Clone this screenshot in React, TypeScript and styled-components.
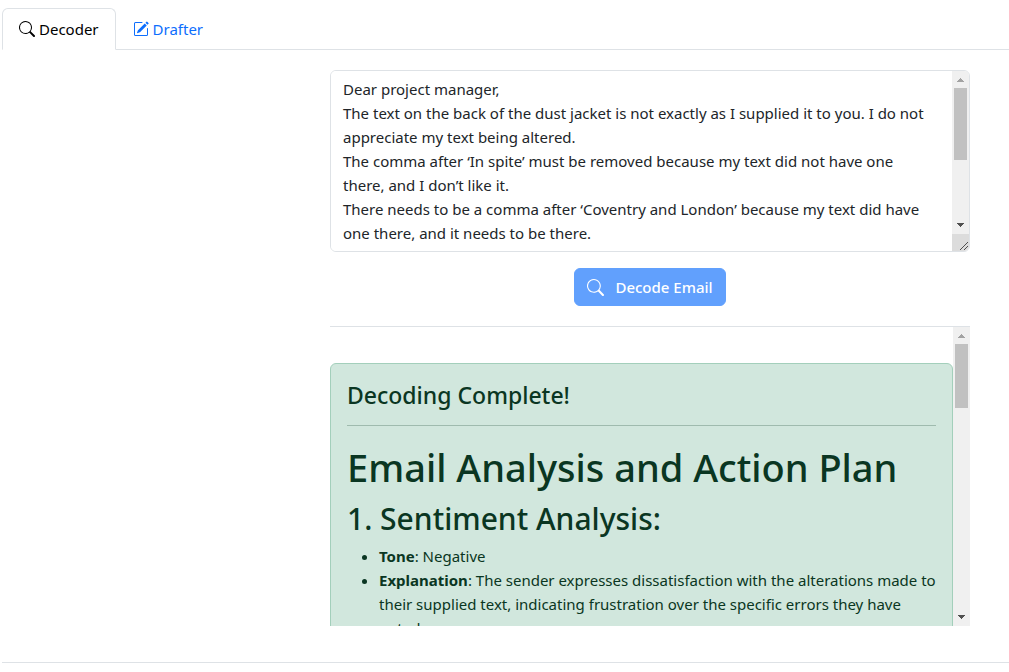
import React, { useState } from "react";
import styled, { createGlobalStyle } from "styled-components";
import { BsPencilSquare, BsSearch } from "react-icons/bs";

const GlobalStyle = createGlobalStyle`
  *, *::before, *::after { box-sizing: border-box; }
  body {
    margin: 0;
    background: #fff;
    color: #212529;
    font-family: "Segoe UI", "Noto Sans", "Open Sans", sans-serif;
    font-size: 15px;
    line-height: 24px;
  }
`;

const Page = styled.div`
  padding: 8px 0 0 2px;
`;

const TabList = styled.div`
  display: flex;
  border-bottom: 1px solid #dee2e6;
`;

const Tab = styled.button<{ $active: boolean }>`
  display: flex;
  align-items: center;
  gap: 4px;
  margin-bottom: -1px;
  padding: 8px 16px;
  border: 1px solid;
  border-color: ${(p) => (p.$active ? "#dee2e6 #dee2e6 #fff" : "transparent")};
  border-radius: 6px 6px 0 0;
  background: ${(p) => (p.$active ? "#fff" : "none")};
  color: ${(p) => (p.$active ? "#000" : "#0d6efd")};
  font: inherit;
  cursor: pointer;
`;

const Panel = styled.main`
  padding: 20px 39px 36px 16px;
  border-bottom: 1px solid #dee2e6;
`;

const Column = styled.div`
  display: flex;
  flex-direction: column;
  max-width: 640px;
  margin-left: auto;
`;

const EmailBox = styled.div`
  display: flex;
  height: 182px;
  border: 1px solid #dee2e6;
  border-radius: 6px;
  overflow: hidden;
`;

const EmailText = styled.textarea`
  flex: 1;
  min-width: 0;
  padding: 6px 16px 6px 12px;
  border: 0;
  background: #fff;
  color: inherit;
  font: inherit;
  resize: none;
  outline: none;
  scrollbar-width: none;
`;

const BarColumn = styled.div`
  display: flex;
  flex-direction: column;
  width: 17px;
  background: #f0f0f0;
`;

const Track = styled.div`
  flex: 1;
  padding: 0 2px;
`;

const Thumb = styled.div<{ $size: number }>`
  height: ${(p) => p.$size}%;
  background: #c1c1c1;
`;

const DecodeButton = styled.button`
  display: flex;
  align-items: center;
  align-self: center;
  gap: 11px;
  margin: 16px 0 20px;
  padding: 6px 12px;
  border: 1px solid #0d6efd;
  border-radius: 6px;
  background: #0d6efd;
  color: #fff;
  font: inherit;
  font-weight: 500;
  opacity: 0.65;
`;

const Results = styled.section`
  display: flex;
  height: 300px;
  border-top: 1px solid #dee2e6;
`;

const ResultsView = styled.div`
  flex: 1;
  min-width: 0;
  padding-top: 36px;
  overflow-y: auto;
  scrollbar-width: none;
`;

const Alert = styled.div`
  padding: 16px;
  border: 1px solid #a3cfbb;
  border-radius: 6px;
  background: #d1e7dd;
  color: #0a3622;
`;

const Title = styled.h4`
  margin: 0;
  font-size: 23px;
  font-weight: 500;
  line-height: 31px;
`;

const Rule = styled.hr`
  margin: 14px 0 16px;
  border: 0;
  border-top: 1px solid #0a3622;
  opacity: 0.25;
`;

const Heading = styled.h1`
  margin: 0 0 8px;
  font-size: 38px;
  font-weight: 500;
  line-height: 50px;
`;

const Subheading = styled.h2`
  margin: 0 0 6px;
  font-size: 30px;
  font-weight: 500;
  line-height: 38px;
`;

const List = styled.ul`
  margin: 0 0 16px;
  padding-left: 32px;
`;

function ScrollBar({ size, grip = false }: { size: number; grip?: boolean }) {
  return (
    <BarColumn aria-hidden>
      <svg width="17" height="17" shapeRendering="crispEdges">
        <path d="M5 11h7v-1h-1v-1h-1v-1h-1v-1h-1v1h-1v1h-1v1h-1z" fill="#a3a3a3" />
      </svg>
      <Track>
        <Thumb $size={size} />
      </Track>
      <svg width="17" height="17" shapeRendering="crispEdges">
        <path d="M5 6h7v1h-1v1h-1v1h-1v1h-1v-1h-1v-1h-1v-1h-1z" fill="#505050" />
      </svg>
      {grip && (
        <svg width="17" height="17">
          <path d="M0 0h17v17H0z" fill="#dcdcdc" />
          <path d="M8 16l8-8M12 16l4-4" stroke="#505050" />
        </svg>
      )}
    </BarColumn>
  );
}

const email = `Dear project manager,
The text on the back of the dust jacket is not exactly as I supplied it to you. I do not appreciate my text being altered.
The comma after ‘In spite’ must be removed because my text did not have one there, and I don’t like it.
There needs to be a comma after ‘Coventry and London’ because my text did have one there, and it needs to be there.`;

export default function App() {
  const [tab, setTab] = useState("decoder");
  const [text, setText] = useState(email);

  return (
    <>
      <GlobalStyle />
      <Page>
        <TabList role="tablist">
          <Tab role="tab" aria-selected={tab === "decoder"} $active={tab === "decoder"} onClick={() => setTab("decoder")}>
            <BsSearch size={16} aria-hidden /> Decoder
          </Tab>
          <Tab role="tab" aria-selected={tab === "drafter"} $active={tab === "drafter"} onClick={() => setTab("drafter")}>
            <BsPencilSquare size={16} aria-hidden /> Drafter
          </Tab>
        </TabList>
        <Panel>
          <Column>
            <EmailBox>
              <EmailText aria-label="Email" value={text} onChange={(e) => setText(e.target.value)} />
              <ScrollBar size={56} grip />
            </EmailBox>
            <DecodeButton disabled>
              <BsSearch size={17} aria-hidden /> Decode Email
            </DecodeButton>
            <Results>
              <ResultsView>
                <Alert>
                  <Title>Decoding Complete!</Title>
                  <Rule />
                  <Heading>Email Analysis and Action Plan</Heading>
                  <Subheading>1. Sentiment Analysis:</Subheading>
                  <List>
                    <li>
                      <strong>Tone</strong>: Negative
                    </li>
                    <li>
                      <strong>Explanation</strong>: The sender expresses dissatisfaction with the alterations made to
                      their supplied text, indicating frustration over the specific errors they have noted.
                    </li>
                  </List>
                </Alert>
              </ResultsView>
              <ScrollBar size={24} />
            </Results>
          </Column>
        </Panel>
      </Page>
    </>
  );
}
